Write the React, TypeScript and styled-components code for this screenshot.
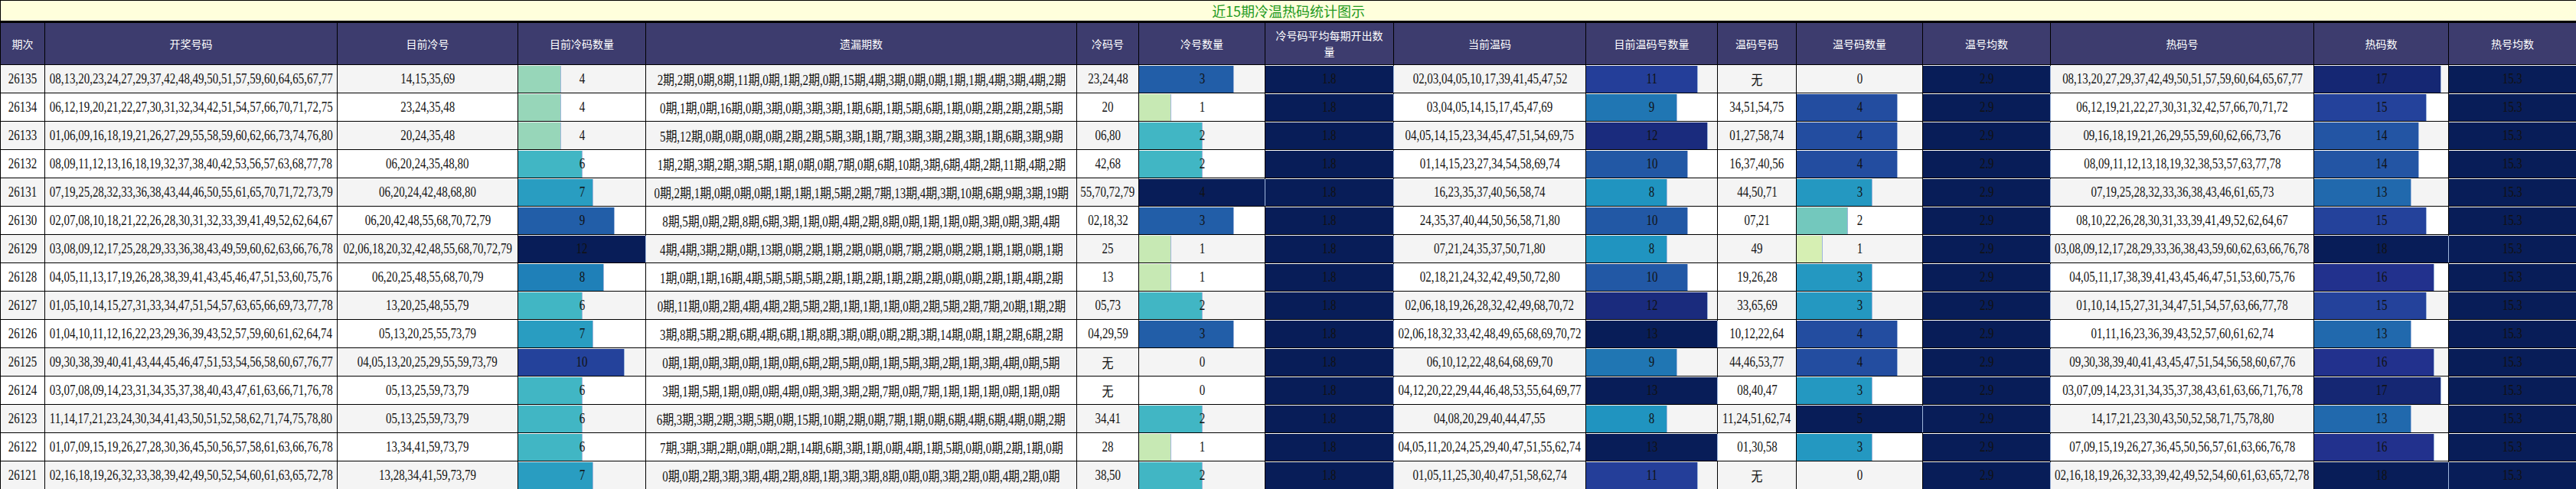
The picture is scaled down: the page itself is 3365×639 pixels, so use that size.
import React from 'react';
import styled, { createGlobalStyle } from 'styled-components';

const Global = createGlobalStyle`
  html, body { margin: 0; padding: 0; background: #fff; }
`;

const Table = styled.table`
  border-collapse: collapse;
  table-layout: fixed;
  width: 3365px;
  font-family: "Liberation Serif", "Noto Sans CJK SC", serif;
`;

const TitleCell = styled.td`
  height: 25px;
  background: #ffffdc;
  border: 1px solid #000;
  border-bottom: 3px solid #000;
  color: #1f9a1f;
  font-family: "Noto Sans CJK SC", sans-serif;
  font-size: 18px;
  text-align: center;
  padding: 0;
`;

const Head = styled.th`
  height: 54px;
  background: #3d3c6e;
  color: #fff;
  font-family: "Noto Sans CJK SC", sans-serif;
  font-weight: 400;
  font-size: 14px;
  line-height: 21px;
  border: 1px solid #000;
  padding: 0 10px;
`;

const Row = styled.tr<{ $alt: boolean }>`
  height: 37px;
  background: ${p => (p.$alt ? '#f4f4f4' : '#fff')};
`;

const Cell = styled.td`
  border: 1px solid #000;
  padding: 0;
  overflow: visible;
`;

const Fit = styled.div`
  display: flex;
  justify-content: center;
  align-items: center;
  height: 35px;
  white-space: nowrap;
`;

const Squeeze = styled.span`
  display: inline-block;
  font-size: 18px;
  color: #111;
  transform: scaleX(0.83);
`;

const BarWrap = styled.div`
  position: relative;
  height: 35px;
  display: flex;
  align-items: center;
  justify-content: center;
`;

const Bar = styled.div`
  position: absolute;
  left: 0;
  top: 0;
  bottom: 0;
  border-right: 1px solid #9fb6dc;
`;

const BarText = styled.span`
  position: relative;
  font-size: 18px;
  color: #111;
  transform: scaleX(0.83);
`;

const stops = ['#ffffd9', '#edf8b1', '#c7e9b4', '#7fcdbb', '#41b6c4', '#1d91c0', '#225ea8', '#253494', '#081d58'];
const hex = (h: string) => [1, 3, 5].map(i => parseInt(h.slice(i, i + 2), 16));
function scale(r: number) {
  const t = Math.max(0, Math.min(1, r)) * 8;
  const i = Math.min(7, Math.floor(t));
  const a = hex(stops[i]);
  const b = hex(stops[i + 1]);
  const f = t - i;
  return `rgb(${a.map((v, k) => Math.round(v + (b[k] - v) * f)).join(',')})`;
}

function BarCell({ v, max }: { v: number; max: number }) {
  const r = v / max;
  return (
    <Cell>
      <BarWrap>
        {v > 0 && <Bar style={{ width: `${r * 100}%`, background: scale(r) }} />}
        <BarText>{v}</BarText>
      </BarWrap>
    </Cell>
  );
}

function Txt({ t }: { t: string }) {
  return (
    <Cell>
      <Fit>
        <Squeeze>{t}</Squeeze>
      </Fit>
    </Cell>
  );
}

const widths = [58, 382, 236, 167, 563, 81, 165, 168, 251, 172, 103, 165, 167, 344, 176, 167];
const heads = ['期次', '开奖号码', '目前冷号', '目前冷码数量', '遗漏期数', '冷码号', '冷号数量', '冷号码平均每期开出数量', '当前温码', '目前温码号数量', '温码号码', '温号码数量', '温号均数', '热码号', '热码数', '热号均数'];

type R = [string, string, string, number, string, string, number, string, number, string, number, string, number];
const m = (s: string) => s.split(',').map(x => x + '期').join(',');

const rows: R[] = [
  ['26135', '08,13,20,23,24,27,29,37,42,48,49,50,51,57,59,60,64,65,67,77', '14,15,35,69', 4, m('2,2,0,8,11,0,1,2,0,15,4,3,0,0,1,1,4,3,4,2'), '23,24,48', 3, '02,03,04,05,10,17,39,41,45,47,52', 11, '无', 0, '08,13,20,27,29,37,42,49,50,51,57,59,60,64,65,67,77', 17],
  ['26134', '06,12,19,20,21,22,27,30,31,32,34,42,51,54,57,66,70,71,72,75', '23,24,35,48', 4, m('0,1,0,16,0,3,0,3,3,1,6,1,5,6,1,0,2,2,2,5'), '20', 1, '03,04,05,14,15,17,45,47,69', 9, '34,51,54,75', 4, '06,12,19,21,22,27,30,31,32,42,57,66,70,71,72', 15],
  ['26133', '01,06,09,16,18,19,21,26,27,29,55,58,59,60,62,66,73,74,76,80', '20,24,35,48', 4, m('5,12,0,0,0,0,2,2,5,3,1,7,3,3,2,3,1,6,3,9'), '06,80', 2, '04,05,14,15,23,34,45,47,51,54,69,75', 12, '01,27,58,74', 4, '09,16,18,19,21,26,29,55,59,60,62,66,73,76', 14],
  ['26132', '08,09,11,12,13,16,18,19,32,37,38,40,42,53,56,57,63,68,77,78', '06,20,24,35,48,80', 6, m('1,2,3,2,3,5,1,0,0,7,0,6,10,3,6,4,2,11,4,2'), '42,68', 2, '01,14,15,23,27,34,54,58,69,74', 10, '16,37,40,56', 4, '08,09,11,12,13,18,19,32,38,53,57,63,77,78', 14],
  ['26131', '07,19,25,28,32,33,36,38,43,44,46,50,55,61,65,70,71,72,73,79', '06,20,24,42,48,68,80', 7, m('0,2,1,0,0,0,1,1,1,5,2,7,13,4,3,10,6,9,3,19'), '55,70,72,79', 4, '16,23,35,37,40,56,58,74', 8, '44,50,71', 3, '07,19,25,28,32,33,36,38,43,46,61,65,73', 13],
  ['26130', '02,07,08,10,18,21,22,26,28,30,31,32,33,39,41,49,52,62,64,67', '06,20,42,48,55,68,70,72,79', 9, m('8,5,0,2,8,6,3,1,0,4,2,8,0,1,1,0,3,0,3,4'), '02,18,32', 3, '24,35,37,40,44,50,56,58,71,80', 10, '07,21', 2, '08,10,22,26,28,30,31,33,39,41,49,52,62,64,67', 15],
  ['26129', '03,08,09,12,17,25,28,29,33,36,38,43,49,59,60,62,63,66,76,78', '02,06,18,20,32,42,48,55,68,70,72,79', 12, m('4,4,3,2,0,13,0,2,1,2,0,0,7,2,0,2,1,1,0,1'), '25', 1, '07,21,24,35,37,50,71,80', 8, '49', 1, '03,08,09,12,17,28,29,33,36,38,43,59,60,62,63,66,76,78', 18],
  ['26128', '04,05,11,13,17,19,26,28,38,39,41,43,45,46,47,51,53,60,75,76', '06,20,25,48,55,68,70,79', 8, m('1,0,1,16,4,5,5,5,2,1,2,1,2,2,0,0,2,1,4,2'), '13', 1, '02,18,21,24,32,42,49,50,72,80', 10, '19,26,28', 3, '04,05,11,17,38,39,41,43,45,46,47,51,53,60,75,76', 16],
  ['26127', '01,05,10,14,15,27,31,33,34,47,51,54,57,63,65,66,69,73,77,78', '13,20,25,48,55,79', 6, m('0,11,0,2,4,4,2,5,2,1,1,1,0,2,5,2,7,20,1,2'), '05,73', 2, '02,06,18,19,26,28,32,42,49,68,70,72', 12, '33,65,69', 3, '01,10,14,15,27,31,34,47,51,54,57,63,66,77,78', 15],
  ['26126', '01,04,10,11,12,16,22,23,29,36,39,43,52,57,59,60,61,62,64,74', '05,13,20,25,55,73,79', 7, m('3,8,5,2,6,4,6,1,8,3,0,0,2,3,14,0,1,2,6,2'), '04,29,59', 3, '02,06,18,32,33,42,48,49,65,68,69,70,72', 13, '10,12,22,64', 4, '01,11,16,23,36,39,43,52,57,60,61,62,74', 13],
  ['26125', '09,30,38,39,40,41,43,44,45,46,47,51,53,54,56,58,60,67,76,77', '04,05,13,20,25,29,55,59,73,79', 10, m('0,1,0,3,0,1,0,6,2,5,0,1,5,3,2,1,3,4,0,5'), '无', 0, '06,10,12,22,48,64,68,69,70', 9, '44,46,53,77', 4, '09,30,38,39,40,41,43,45,47,51,54,56,58,60,67,76', 16],
  ['26124', '03,07,08,09,14,23,31,34,35,37,38,40,43,47,61,63,66,71,76,78', '05,13,25,59,73,79', 6, m('3,1,5,1,0,0,4,0,3,3,2,7,0,7,1,1,1,0,1,0'), '无', 0, '04,12,20,22,29,44,46,48,53,55,64,69,77', 13, '08,40,47', 3, '03,07,09,14,23,31,34,35,37,38,43,61,63,66,71,76,78', 17],
  ['26123', '11,14,17,21,23,24,30,34,41,43,50,51,52,58,62,71,74,75,78,80', '05,13,25,59,73,79', 6, m('6,3,3,2,3,5,0,15,10,2,0,7,1,0,6,4,6,4,0,2'), '34,41', 2, '04,08,20,29,40,44,47,55', 8, '11,24,51,62,74', 5, '14,17,21,23,30,43,50,52,58,71,75,78,80', 13],
  ['26122', '01,07,09,15,19,26,27,28,30,36,45,50,56,57,58,61,63,66,76,78', '13,34,41,59,73,79', 6, m('7,3,3,2,0,0,2,14,6,3,1,0,4,1,5,0,0,2,1,0'), '28', 1, '04,05,11,20,24,25,29,40,47,51,55,62,74', 13, '01,30,58', 3, '07,09,15,19,26,27,36,45,50,56,57,61,63,66,76,78', 16],
  ['26121', '02,16,18,19,26,32,33,38,39,42,49,50,52,54,60,61,63,65,72,78', '13,28,34,41,59,73,79', 7, m('0,0,2,3,3,4,2,8,1,3,3,8,0,0,3,2,0,4,2,0'), '38,50', 2, '01,05,11,25,30,40,47,51,58,62,74', 11, '无', 0, '02,16,18,19,26,32,33,39,42,49,52,54,60,61,63,65,72,78', 18],
];

export default function App() {
  return (
    <>
      <Global />
      <Table>
        <colgroup>
          {widths.map((w, i) => <col key={i} style={{ width: w }} />)}
        </colgroup>
        <tbody>
          <tr>
            <TitleCell colSpan={16}>近15期冷温热码统计图示</TitleCell>
          </tr>
          <tr>
            {heads.map(h => <Head key={h}>{h}</Head>)}
          </tr>
          {rows.map((r, i) => (
            <Row key={r[0]} $alt={i % 2 === 0}>
              <Txt t={r[0]} />
              <Txt t={r[1]} />
              <Txt t={r[2]} />
              <BarCell v={r[3]} max={12} />
              <Txt t={r[4]} />
              <Txt t={r[5]} />
              <BarCell v={r[6]} max={4} />
              <BarCell v={1.8} max={1.8} />
              <Txt t={r[7]} />
              <BarCell v={r[8]} max={13} />
              <Txt t={r[9]} />
              <BarCell v={r[10]} max={5} />
              <BarCell v={2.9} max={2.9} />
              <Txt t={r[11]} />
              <BarCell v={r[12]} max={18} />
              <BarCell v={15.3} max={15.3} />
            </Row>
          ))}
        </tbody>
      </Table>
    </>
  );
}
